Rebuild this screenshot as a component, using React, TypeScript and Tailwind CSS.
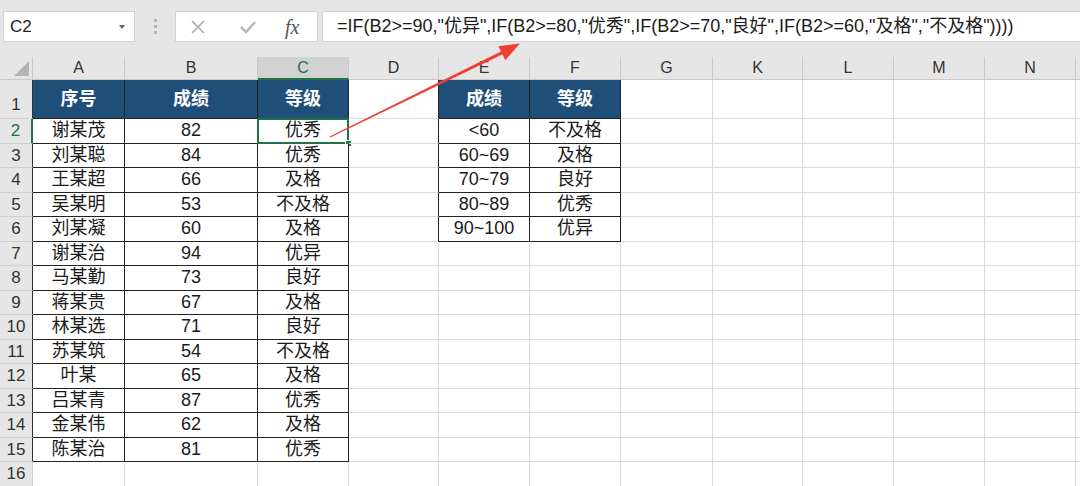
import React from 'react';

const FONT = { fontFamily: '"Liberation Sans", "Noto Sans CJK SC", sans-serif' };

// visible columns (H-J hidden in the sheet)
const COLS: { k: string; w: string }[] = [
  { k: 'A', w: 'w-[92px]' },
  { k: 'B', w: 'w-[133px]' },
  { k: 'C', w: 'w-[91px]' },
  { k: 'D', w: 'w-[90px]' },
  { k: 'E', w: 'w-[91px]' },
  { k: 'F', w: 'w-[91px]' },
  { k: 'G', w: 'w-[92px]' },
  { k: 'K', w: 'w-[90px]' },
  { k: 'L', w: 'w-[91px]' },
  { k: 'M', w: 'w-[91px]' },
  { k: 'N', w: 'w-[91px]' },
];

const SCORES: [string, number, string][] = [
  ['谢某茂', 82, '优秀'],
  ['刘某聪', 84, '优秀'],
  ['王某超', 66, '及格'],
  ['吴某明', 53, '不及格'],
  ['刘某凝', 60, '及格'],
  ['谢某治', 94, '优异'],
  ['马某勤', 73, '良好'],
  ['蒋某贵', 67, '及格'],
  ['林某选', 71, '良好'],
  ['苏某筑', 54, '不及格'],
  ['叶某', 65, '及格'],
  ['吕某青', 87, '优秀'],
  ['金某伟', 62, '及格'],
  ['陈某治', 81, '优秀'],
];

const LEVELS: [string, string][] = [
  ['<60', '不及格'],
  ['60~69', '及格'],
  ['70~79', '良好'],
  ['80~89', '优秀'],
  ['90~100', '优异'],
];

const FORMULA = '=IF(B2>=90,"优异",IF(B2>=80,"优秀",IF(B2>=70,"良好",IF(B2>=60,"及格","不及格"))))';

function cellText(row: number, col: string): string {
  if (row === 1) {
    if (col === 'A') return '序号';
    if (col === 'B' || col === 'E') return '成绩';
    if (col === 'C' || col === 'F') return '等级';
    return '';
  }
  const s = SCORES[row - 2];
  if (s) {
    if (col === 'A') return s[0];
    if (col === 'B') return String(s[1]);
    if (col === 'C') return s[2];
  }
  const l = LEVELS[row - 2];
  if (l) {
    if (col === 'E') return l[0];
    if (col === 'F') return l[1];
  }
  return '';
}

function Toolbar() {
  return (
    <div className="h-[57px] bg-[#e6e6e6] pt-[11px]">
      <div className="flex h-[31px]">
        <div className="ml-[3px] w-[132px] bg-white border border-[#d4d4d4] flex items-center justify-between pl-[6px] pr-[9px] text-[17px] text-[#222]">
          <span>C2</span>
          <span className="w-0 h-0 border-l-[3.5px] border-r-[3.5px] border-t-[4px] border-l-transparent border-r-transparent border-t-[#666]"></span>
        </div>
        <div className="w-[40px] flex flex-col items-center justify-center gap-[3px]">
          <span className="w-[3px] h-[3px] bg-[#b5b5b5]"></span>
          <span className="w-[3px] h-[3px] bg-[#b5b5b5]"></span>
          <span className="w-[3px] h-[3px] bg-[#b5b5b5]"></span>
        </div>
        <div className="w-[143px] bg-white border border-[#d4d4d4] flex items-center pl-[14px]">
          <svg width="16" height="16" viewBox="0 0 16 16">
            <path d="M2 2 L14 14 M14 2 L2 14" stroke="#a8a8a8" strokeWidth="1.6" fill="none" />
          </svg>
          <svg className="ml-[33px]" width="18" height="16" viewBox="0 0 18 16">
            <path d="M2 8 L7 13 L16 3" stroke="#b8b8b8" strokeWidth="2.6" fill="none" />
          </svg>
          <span className="ml-[28px] text-[20px] italic text-[#555] leading-none" style={{ fontFamily: '"Liberation Serif", serif' }}>
            fx
          </span>
        </div>
        <div className="ml-[4px] flex-1 bg-white border border-r-0 border-[#d4d4d4] flex items-center pl-[14px] text-[18px] text-[#1a1a1a] whitespace-nowrap overflow-hidden">
          {FORMULA}
        </div>
      </div>
    </div>
  );
}

function ColumnHeader() {
  return (
    <div className="flex h-[23px] bg-[#e6e6e6] text-[16px] text-[#333]">
      <div className="w-[33px] border-r border-b border-[#c8c8c8] relative">
        <svg className="absolute right-[3px] bottom-[3px]" width="15" height="15" viewBox="0 0 15 15">
          <polygon points="15,0 15,15 0,15" fill="#b4b4b4" />
        </svg>
      </div>
      {COLS.map((c) =>
        c.k === 'C' ? (
          <div key={c.k} className={`${c.w} bg-[#d2d2d2] border-r border-[#c8c8c8] border-b-2 border-b-[#217346] text-[#217346] flex items-center justify-center`}>
            {c.k}
          </div>
        ) : (
          <div key={c.k} className={`${c.w} border-r border-b border-[#c8c8c8] flex items-center justify-center`}>
            {c.k}
          </div>
        )
      )}
      <div className="flex-1 border-b border-[#c8c8c8]"></div>
    </div>
  );
}

function Row({ r }: { r: number }) {
  const inLeft = r <= 15;
  const inRight = r <= 6;
  const head = r === 1;
  const rowH = head ? 'h-[39px]' : 'h-[24.5px]';

  let hdr = 'w-[33px] bg-[#e6e6e6] border-b border-[#d0d0d0] flex justify-center text-[17px] text-[#333] ';
  hdr += head ? 'items-end pb-[1px] ' : 'items-center ';
  if (r === 2) hdr += 'bg-[#d2d2d2] text-[#217346] border-r-2 border-r-[#217346]';
  else if (inLeft) hdr += 'border-r border-r-[#333]';
  else hdr += 'border-r border-r-[#d0d0d0]';

  return (
    <div className={`flex ${rowH}`}>
      <div className={hdr}>{r}</div>
      {COLS.map((c) => {
        const table = (inLeft && (c.k === 'A' || c.k === 'B' || c.k === 'C')) || (inRight && (c.k === 'E' || c.k === 'F'));
        let cls = `${c.w} relative flex items-center justify-center text-[18px] whitespace-nowrap `;
        if (table) {
          cls += 'border-r border-b border-[#222] ';
          cls += head ? 'bg-[#1f4e79] text-white font-bold' : 'bg-white text-[#1a1a1a]';
        } else if (c.k === 'D' && inRight) {
          cls += 'border-r border-r-[#222] border-b border-b-[#dadada]';
        } else {
          cls += 'border-r border-b border-[#dadada]';
        }
        return (
          <div key={c.k} className={cls}>
            {cellText(r, c.k)}
            {r === 2 && c.k === 'C' && (
              <>
                <span className="absolute left-[-1px] top-[-1px] right-[-1px] bottom-[-1px] border-2 border-[#217346]"></span>
                <span className="absolute right-[-4px] bottom-[-4px] w-[7px] h-[7px] bg-[#217346] border border-white"></span>
              </>
            )}
          </div>
        );
      })}
      <div className="flex-1 border-b border-[#dadada]"></div>
    </div>
  );
}

export default function App() {
  const rows = Array.from({ length: 16 }, (_, i) => i + 1);
  return (
    <div className="relative w-[1080px] h-[486px] overflow-hidden bg-white" style={FONT}>
      <Toolbar />
      <ColumnHeader />
      {rows.map((r) => (
        <Row key={r} r={r} />
      ))}
      {/* red annotation arrow */}
      <svg className="absolute left-0 top-0 pointer-events-none" width="1080" height="486" viewBox="0 0 1080 486">
        <polygon points="330.3,137.5 329.7,136.5 501.3,51.3 502.7,54.3" fill="#ef3f36" />
        <polygon points="520,43.5 498.4,46.2 505.3,60.2" fill="#ef3f36" />
      </svg>
    </div>
  );
}
